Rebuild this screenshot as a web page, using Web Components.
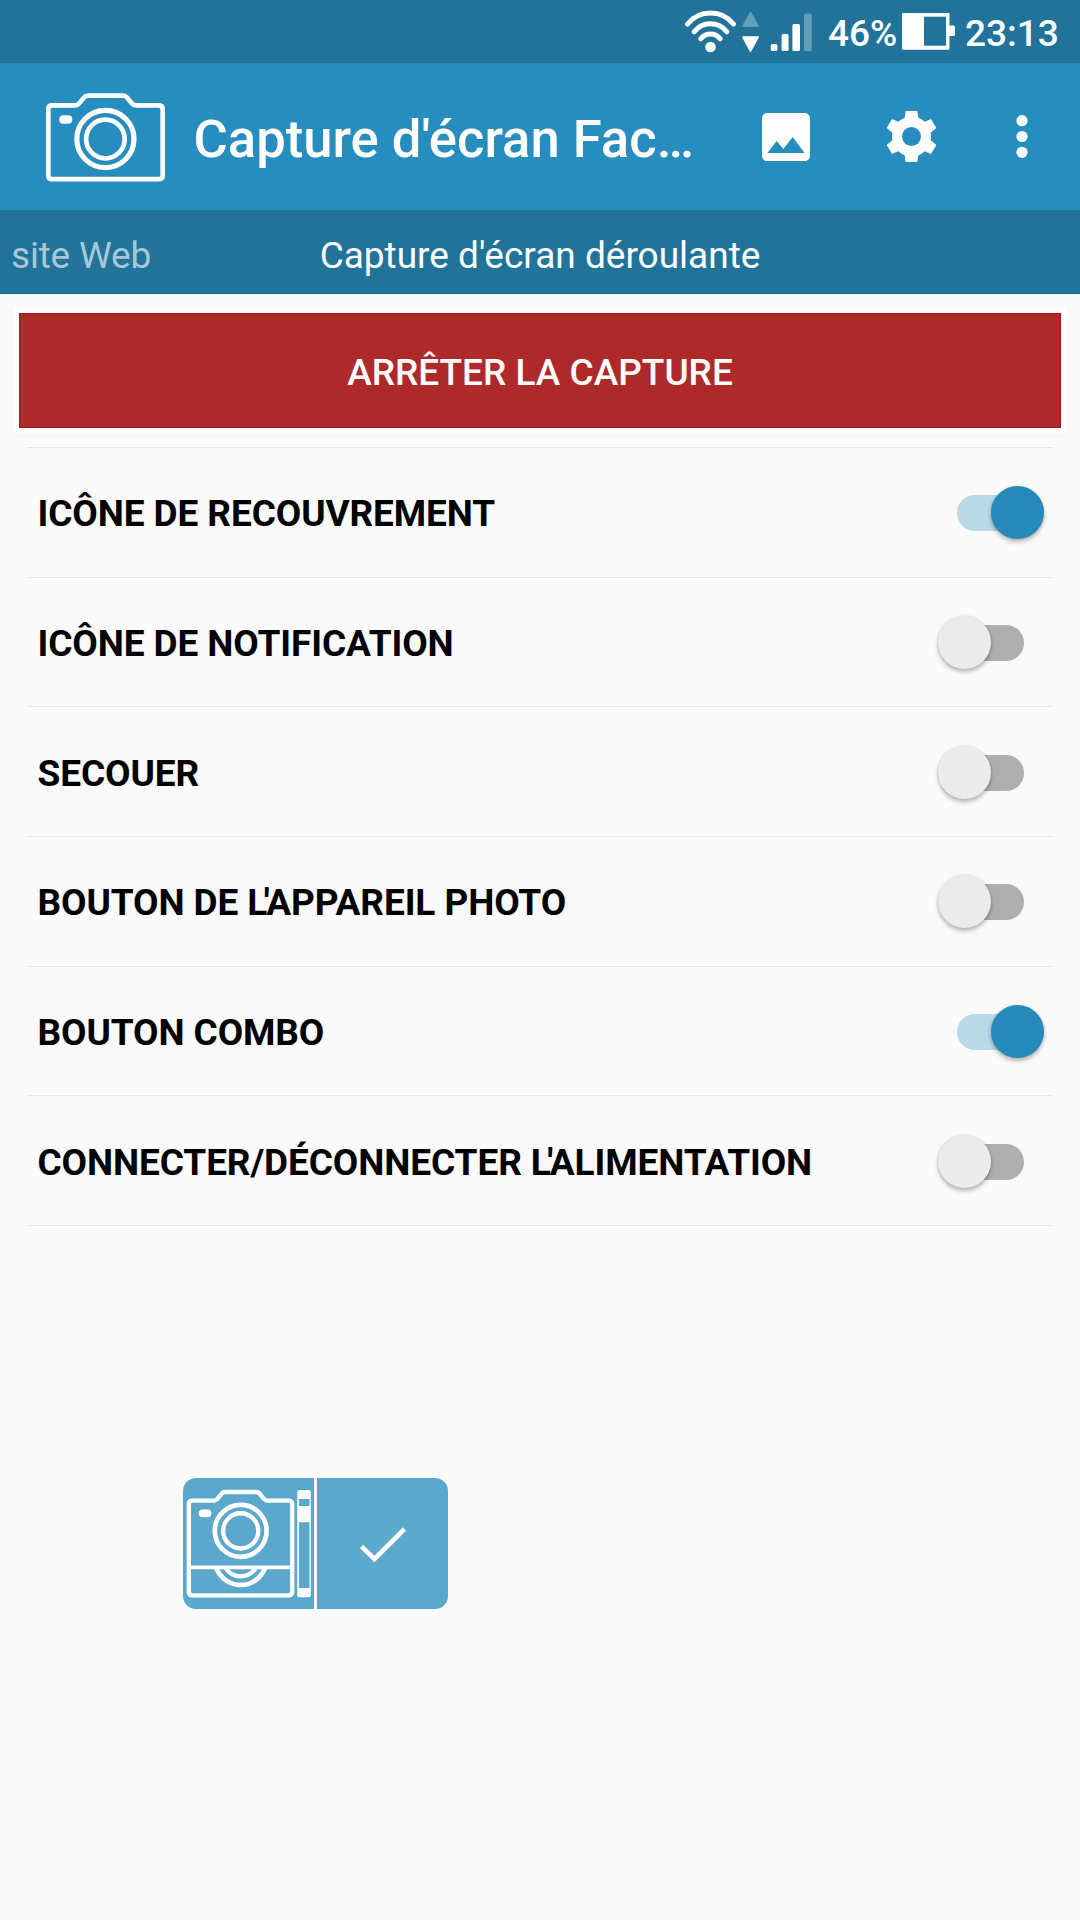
<!DOCTYPE html>
<html lang="fr">
<head>
<meta charset="utf-8">
<title>Capture d'écran</title>
<style>
    body { margin: 0; background: #fafafa; font-family: Roboto, sans-serif; }
</style>
</head>
<body>
<capture-app></capture-app>

<script>
// viewBox + markup for every icon, sizes are set by the users of <ui-icon>
const ICONS = {
    wifi: ['0 0 51 43', `
        <g fill="none" stroke="#fff" stroke-width="5" stroke-linecap="round">
            <path d="M2.6 14A29.5 29.5 0 0 1 48.4 14"/>
            <path d="M9.2 21.8A20.5 20.5 0 0 1 41.8 21.8"/>
            <path d="M15.8 28.8A12.2 12.2 0 0 1 35.2 28.8"/>
        </g>
        <circle cx="25.5" cy="37" r="5.3" fill="#fff"/>`],
    data: ['0 0 17 42', `
        <g stroke-width="2" stroke-linejoin="round">
            <path d="M8.5 2L15.8 15H1.2Z" fill="#649fb9" stroke="#649fb9"/>
            <path d="M8.5 39.8L15.8 26.2H1.2Z" fill="#fff" stroke="#fff"/>
        </g>`],
    signal: ['0 0 42 39', `
        <g fill="#fff">
            <rect x="0.8" y="31" width="6.6" height="7" rx="1.6"/>
            <rect x="11.6" y="21" width="7" height="17" rx="1.6"/>
            <rect x="22.4" y="11" width="7.6" height="27" rx="1.6"/>
            <rect x="34" y="0.6" width="7.8" height="37.4" rx="1.6" fill="#649fb9"/>
        </g>`],
    battery: ['0 0 53 37', `
        <path d="M1 0H46.5Q47.5 0 47.5 1V12.5H51.5Q53 12.5 53 14V21.5Q53 23 51.5 23H47.5V35.7Q47.5 36.7 46.5 36.7H1Q0 36.7 0 35.7V1Q0 0 1 0Z" fill="#fff"/>
        <rect x="22" y="3.7" width="22" height="29" fill="#21739a"/>`],
    camera: ['0 0 119 89', `
        <g fill="none" stroke="#fff" stroke-width="4.7" stroke-linejoin="round">
            <path d="M6 12.3H29Q31.5 12.3 33 10.5L38 4.5Q39.5 2.7 42 2.7H77Q79.5 2.7 81 4.5L86 10.5Q87.5 12.3 90 12.3H112.7Q116.7 12.3 116.7 16.3V82.2Q116.7 86.2 112.7 86.2H6Q2.3 86.2 2.3 82.2V16.3Q2.3 12.3 6 12.3Z"/>
            <circle cx="59.4" cy="46" r="28.6" stroke-width="5.2"/>
            <circle cx="59.4" cy="46" r="19.3"/>
        </g>
        <rect x="13.3" y="22.3" width="13" height="8.5" rx="4" fill="#fff"/>`],
    image: ['0 0 24 24', `
        <path fill="#fff" d="M21 19V5c0-1.1-.9-2-2-2H5c-1.1 0-2 .9-2 2v14c0 1.1.9 2 2 2h14c1.1 0 2-.9 2-2zM8.5 13.5l2.5 3.01L14.5 12l4.5 6H5l3.5-4.5z"/>`],
    gear: ['20 18 153 153', `
        <path fill="#fff" d="M79 18H114L117 38Q128 42 136 50L155 42L171 69L154 83Q156 94.5 154 106L171 120L155 147L136 139Q128 147 117 151L114 171H79L76 151Q65 147 57 139L38 147L22 120L39 106Q37 94.5 39 83L22 69L38 42L57 50Q65 42 76 38Z"/>
        <circle cx="96.5" cy="94.5" r="28.5" fill="#278dbe"/>`],
    more: ['0 0 12 43', `
        <g fill="#fff"><circle cx="6" cy="5.7" r="5.6"/><circle cx="6" cy="21.5" r="5.6"/><circle cx="6" cy="37.3" r="5.6"/></g>`],
    scroll: ['69 54 393 394', `
        <g fill="none" stroke="#fff" stroke-width="13" stroke-linejoin="round">
            <path d="M97 122H162Q168 122 172 117L185 101Q189 96 195 96H289Q295 96 299 101L312 117Q316 122 322 122H386Q397 122 397 133V396Q397 407 386 407H97Q86 407 86 396V133Q86 122 97 122Z"/>
            <path d="M86 323H397" stroke-width="11"/>
            <circle cx="242" cy="213" r="78" stroke-width="14"/>
            <circle cx="242" cy="213" r="53"/>
            <path d="M169 325A78 78 0 0 0 315 325" stroke-width="14"/>
            <path d="M197 325A53 53 0 0 0 287 325"/>
        </g>
        <rect x="116" y="149" width="38" height="23" rx="11" fill="#fff"/>
        <path fill="#fff" fill-rule="evenodd" d="M419 90H446Q453 90 453 97V406Q453 413 446 413H419Q412 413 412 406V97Q412 90 419 90ZM417 117V138H449V117ZM417 187V385H449V187Z"/>`],
    check: ['0 0 48 38', `
        <path d="M2.5 20.5L15.5 33L45.5 3" fill="none" stroke="#fff" stroke-width="4.6"/>`],
};

class UiIcon extends HTMLElement {
    constructor() {
        super();
        this.attachShadow({ mode: 'open' });
    }

    connectedCallback() {
        const [viewBox, markup] = ICONS[this.getAttribute('name')];
        this.shadowRoot.innerHTML = `
            <style>
                :host { display: block; flex: none; }
                svg { display: block; width: 100%; height: 100%; }
            </style>
            <svg viewBox="${viewBox}">${markup}</svg>
        `;
    }
}

class StatusBar extends HTMLElement {
    constructor() {
        super();
        this.attachShadow({ mode: 'open' });
        this.shadowRoot.innerHTML = `
            <style>
                :host {
                    display: flex; justify-content: flex-end; align-items: flex-start;
                    box-sizing: border-box; height: 63px; padding-right: 22px;
                    background: #21739a; color: #fff;
                    font-size: 37px; font-weight: 500; line-height: 45px;
                }
                .wifi { width: 51px; height: 43px; margin-top: 10px; }
                .data { width: 17px; height: 42px; margin: 11px 0 0 6px; }
                .signal { width: 42px; height: 39px; margin: 12.5px 0 0 11px; }
                .battery { width: 53px; height: 37px; margin-top: 13px; }
                .level { box-sizing: border-box; width: 90px; padding: 11px 0 0 16px; }
                .time { box-sizing: border-box; width: 103px; padding: 11px 0 0 10px; }
                span { white-space: nowrap; }
            </style>
            <ui-icon class="wifi" name="wifi"></ui-icon>
            <ui-icon class="data" name="data"></ui-icon>
            <ui-icon class="signal" name="signal"></ui-icon>
            <span class="level">46%</span>
            <ui-icon class="battery" name="battery"></ui-icon>
            <span class="time">23:13</span>
        `;
    }
}

class AppBar extends HTMLElement {
    constructor() {
        super();
        this.attachShadow({ mode: 'open' });
        this.shadowRoot.innerHTML = `
            <style>
                :host {
                    display: flex; align-items: center; box-sizing: border-box;
                    height: 147px; padding: 0 52px 0 46px;
                    background: #278dbe; color: #fff;
                }
                h1 {
                    flex: 1; margin: 5px 0 0 28.5px; white-space: nowrap;
                    font-size: 52.6px; font-weight: 500; line-height: 62px;
                }
                .logo { width: 119px; height: 89px; margin-top: 1px; }
                .image { width: 64px; height: 64px; }
                .gear { width: 51px; height: 51px; margin-left: 68px; }
                .more { width: 12px; height: 43px; margin-left: 79px; }
            </style>
            <ui-icon class="logo" name="camera"></ui-icon>
            <h1><slot></slot></h1>
            <ui-icon class="image" name="image"></ui-icon>
            <ui-icon class="gear" name="gear"></ui-icon>
            <ui-icon class="more" name="more"></ui-icon>
        `;
    }
}

class TabStrip extends HTMLElement {
    constructor() {
        super();
        this.attachShadow({ mode: 'open' });
        this.shadowRoot.innerHTML = `
            <style>
                :host {
                    display: grid; grid-template-columns: 1fr auto 1fr; box-sizing: border-box;
                    height: 84px; padding: 23px 11px 0; border-bottom: 1px solid #176a95;
                    background: #21739a; color: #fff;
                    font-size: 37px; line-height: 46px; white-space: nowrap;
                }
                .previous { color: #a6c7d7; letter-spacing: -.2px; }
            </style>
            <span class="previous"><slot name="previous"></slot></span>
            <span><slot></slot></span>
            <span></span>
        `;
    }
}

class StopButton extends HTMLElement {
    constructor() {
        super();
        this.attachShadow({ mode: 'open' });
        this.shadowRoot.innerHTML = `
            <style>
                :host { display: block; margin: 19px 19px 0; }
                button {
                    display: block; box-sizing: border-box; width: 100%; height: 115px; padding: 4px 0 0;
                    border: 1px solid #a81418; background: #ae2a2a; color: #fff;
                    box-shadow: 0 0 0 5px #fff;
                    font: 500 37px/42px Roboto, sans-serif;
                }
            </style>
            <button><slot></slot></button>
        `;
    }
}

class ToggleSwitch extends HTMLElement {
    constructor() {
        super();
        this.attachShadow({ mode: 'open' });
        this.shadowRoot.innerHTML = `
            <style>
                :host {
                    display: flex; align-items: center; flex: none;
                    width: 67px; height: 36px; border-radius: 18px; background: #aeaeae;
                }
                i {
                    flex: none; width: 53px; height: 53px; margin: -1px 0 0 -19.5px;
                    border-radius: 50%; background: #ebebeb;
                    box-shadow: 0 3px 4px rgba(0, 0, 0, .26), 0 0 3px rgba(0, 0, 0, .12);
                }
                :host([checked]) { background: #b9d9e6; }
                :host([checked]) i { margin-left: 34px; background: #258aba; }
            </style>
            <i></i>
        `;
    }
}

class SettingRow extends HTMLElement {
    constructor() {
        super();
        this.attachShadow({ mode: 'open' });
        const checked = this.hasAttribute('checked') ? 'checked' : '';
        this.shadowRoot.innerHTML = `
            <style>
                :host {
                    display: flex; justify-content: space-between; align-items: center;
                    box-sizing: border-box; height: 129.7px; padding: 2px 29px 0 10.5px;
                    border-bottom: 1px solid #e8e8e8; color: #000;
                    font-size: 37px; font-weight: 700; line-height: 42px; white-space: nowrap;
                    letter-spacing: -.1px;
                }
                span { padding-top: 2px; }
            </style>
            <span><slot></slot></span>
            <toggle-switch ${checked}></toggle-switch>
        `;
    }
}

// Floating overlay shown on top of every app while capturing
class CaptureOverlay extends HTMLElement {
    constructor() {
        super();
        this.attachShadow({ mode: 'open' });
        this.shadowRoot.innerHTML = `
            <style>
                :host {
                    position: absolute; left: 183px; top: 1478px;
                    display: flex; width: 265px; height: 131px;
                    border-radius: 13px; background: #5ca8cd; overflow: hidden;
                }
                .scroll { width: 131px; height: 131px; }
                .done {
                    flex: 1; display: flex; align-items: center; justify-content: center;
                    border-left: 3px solid #fff;
                }
                .check { width: 48px; height: 38px; margin: 2px 0 0 1px; }
            </style>
            <ui-icon class="scroll" name="scroll"></ui-icon>
            <div class="done"><ui-icon class="check" name="check"></ui-icon></div>
        `;
    }
}

class CaptureApp extends HTMLElement {
    constructor() {
        super();
        this.attachShadow({ mode: 'open' });
        this.shadowRoot.innerHTML = `
            <style>
                :host { display: block; position: relative; width: 1080px; height: 1920px; overflow: hidden; }
                .settings { margin: 19px 27px 0; border-top: 1px solid #e3e3e3; }
                /* pull the elided article against the next word */
                .elision { letter-spacing: -3.5px; }
            </style>
            <status-bar></status-bar>
            <app-bar>Capture d'écran Fac…</app-bar>
            <tab-strip><span slot="previous">site Web</span>Capture d'écran déroulante</tab-strip>
            <stop-button>ARRÊTER LA CAPTURE</stop-button>
            <div class="settings">
                <setting-row checked>ICÔNE DE RECOUVREMENT</setting-row>
                <setting-row>ICÔNE DE NOTIFICATION</setting-row>
                <setting-row>SECOUER</setting-row>
                <setting-row>BOUTON DE <span class="elision">L'</span>APPAREIL PHOTO</setting-row>
                <setting-row checked>BOUTON COMBO</setting-row>
                <setting-row>CONNECTER/DÉCONNECTER <span class="elision">L'</span>ALIMENTATION</setting-row>
            </div>
            <capture-overlay></capture-overlay>
        `;
    }
}

customElements.define('ui-icon', UiIcon);
customElements.define('status-bar', StatusBar);
customElements.define('app-bar', AppBar);
customElements.define('tab-strip', TabStrip);
customElements.define('stop-button', StopButton);
customElements.define('toggle-switch', ToggleSwitch);
customElements.define('setting-row', SettingRow);
customElements.define('capture-overlay', CaptureOverlay);
customElements.define('capture-app', CaptureApp);
</script>
</body>
</html>
